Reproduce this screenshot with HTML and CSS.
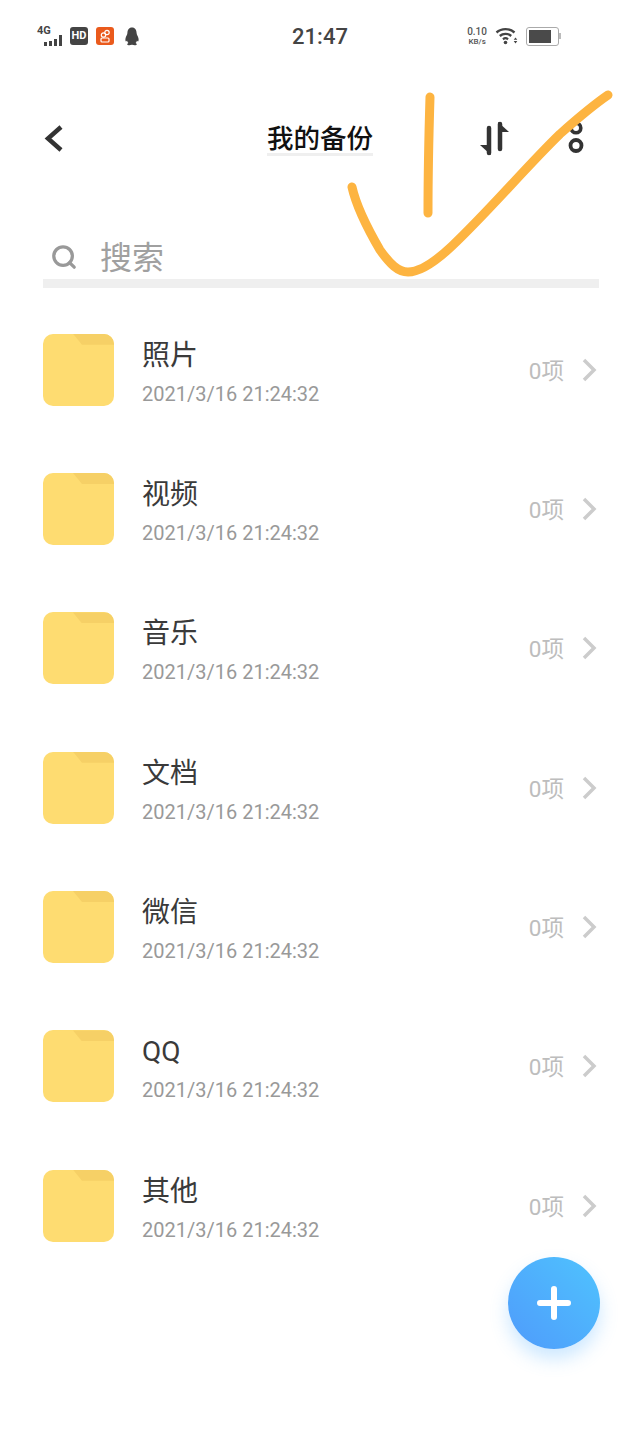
FILE: index.html
```html
<!DOCTYPE html>
<html lang="zh-CN">
<head>
    <meta charset="utf-8">
    <title>我的备份</title>
    <link rel="stylesheet" href="styles.css">
</head>
<body>
<div class="page">
    <div class="status_bar">
        <div class="status_left">
            <div class="signal">
                <span class="signal_text">4G</span>
                <svg class="signal_bars" width="22" height="14" viewBox="0 0 22 14">
                    <rect x="0" y="9" width="3" height="4" fill="#444"/>
                    <rect x="5" y="8" width="3" height="5" fill="#444"/>
                    <rect x="10" y="6" width="3" height="7" fill="#444"/>
                    <rect x="15" y="2" width="3" height="11" fill="#444"/>
                </svg>
            </div>
            <span class="hd_badge">HD</span>
            <svg class="app_badge" width="18" height="18" viewBox="0 0 18 18">
                <rect width="18" height="18" rx="3" fill="#ea5a1c"/>
                <circle cx="11" cy="5.500" r="2.200" fill="none" stroke="#fff" stroke-width="1.200"/>
                <circle cx="7.500" cy="8" r="2.200" fill="none" stroke="#fff" stroke-width="1.200"/>
                <rect x="5" y="11" width="8" height="4" rx="1" fill="none" stroke="#fff" stroke-width="1.200"/>
            </svg>
            <svg class="qq_icon" width="16" height="19" viewBox="0 0 16 19">
                <path d="M8 0.5C4.8 0.5 3.4 3 3.4 6C3.4 7.5 2 9 1.5 11.5C1.2 13 1.5 14.5 2 14.5C2.5 14.5 3 13.5 3 13.5C3.3 14.6 3.8 15.4 4.4 16C3.4 16.5 3 17 3.2 17.6C3.5 18.4 6 18.5 8 17.8C10 18.5 12.5 18.4 12.8 17.6C13 17 12.6 16.5 11.6 16C12.2 15.4 12.7 14.6 13 13.5C13 13.5 13.5 14.5 14 14.5C14.5 14.5 14.8 13 14.5 11.5C14 9 12.6 7.5 12.6 6C12.6 3 11.2 0.5 8 0.5Z" fill="#444"/>
            </svg>
        </div>
        <div class="status_time">21:47</div>
        <div class="status_right">
            <div class="net_speed">
                <span class="net_value">0.10</span>
                <span class="net_unit">KB/s</span>
            </div>
            <svg class="wifi_icon" width="24" height="18" viewBox="0 0 24 18">
                <path d="M1.5 5.5C6.5 1 14.5 1 19.5 5.5" fill="none" stroke="#444" stroke-width="2.400"/>
                <path d="M4.8 9C8 6.2 13 6.2 16.2 9" fill="none" stroke="#444" stroke-width="2.400"/>
                <path d="M8 12.3C9.5 11 11.5 11 13 12.3" fill="none" stroke="#444" stroke-width="2.200"/>
                <circle cx="10.500" cy="15.500" r="1.800" fill="#444"/>
                <path d="M20.5 10.5L22.3 12.7H18.7Z M20.5 16.5L18.7 14H22.3Z" fill="#444"/>
            </svg>
            <div class="battery">
                <div class="battery_body"><div class="battery_fill"></div></div>
                <div class="battery_cap"></div>
            </div>
        </div>
    </div>

    <div class="nav_bar">
        <svg class="back_icon" width="24" height="30" viewBox="0 0 24 30">
            <path d="M20 4L7 15.500L20 27" fill="none" stroke="#333" stroke-width="4.500"/>
        </svg>
        <div class="nav_title">我的备份</div>
        <svg class="sort_icon" width="34" height="38" viewBox="0 0 34 38">
            <path d="M11 8V33M22 4V29" stroke="#333" stroke-width="4.500" stroke-linecap="round"/>
            <path d="M2 25H13V35Z" fill="#333"/>
            <path d="M20 2L31 12H20Z" fill="#333"/>
        </svg>
        <svg class="more_icon" width="20" height="38" viewBox="0 0 20 38">
            <circle cx="10" cy="8" r="4.800" fill="none" stroke="#333" stroke-width="3.600"/>
            <circle cx="10" cy="25.500" r="5.500" fill="none" stroke="#333" stroke-width="3.800"/>
        </svg>
    </div>

    <div class="search_row">
        <svg class="search_icon" width="26" height="26" viewBox="0 0 28 28">
            <circle cx="13" cy="13" r="10" fill="none" stroke="#999" stroke-width="3.500"/>
            <path d="M20 20L25 25" stroke="#999" stroke-width="3.500" stroke-linecap="round"/>
        </svg>
        <span class="search_text">搜索</span>
    </div>

    <div class="backup_list">
        <div class="backup_row">
            <div class="folder"><div class="folder_tab"></div></div>
            <div class="row_text"><div class="row_name">照片</div><div class="row_date">2021/3/16 21:24:32</div></div>
            <div class="row_count">0项</div>
            <svg class="row_arrow" width="16" height="26" viewBox="0 0 16 26"><path d="M3 3L13 13L3 23" fill="none" stroke="#ccc" stroke-width="3.500"/></svg>
        </div>
        <div class="backup_row">
            <div class="folder"><div class="folder_tab"></div></div>
            <div class="row_text"><div class="row_name">视频</div><div class="row_date">2021/3/16 21:24:32</div></div>
            <div class="row_count">0项</div>
            <svg class="row_arrow" width="16" height="26" viewBox="0 0 16 26"><path d="M3 3L13 13L3 23" fill="none" stroke="#ccc" stroke-width="3.500"/></svg>
        </div>
        <div class="backup_row">
            <div class="folder"><div class="folder_tab"></div></div>
            <div class="row_text"><div class="row_name">音乐</div><div class="row_date">2021/3/16 21:24:32</div></div>
            <div class="row_count">0项</div>
            <svg class="row_arrow" width="16" height="26" viewBox="0 0 16 26"><path d="M3 3L13 13L3 23" fill="none" stroke="#ccc" stroke-width="3.500"/></svg>
        </div>
        <div class="backup_row">
            <div class="folder"><div class="folder_tab"></div></div>
            <div class="row_text"><div class="row_name">文档</div><div class="row_date">2021/3/16 21:24:32</div></div>
            <div class="row_count">0项</div>
            <svg class="row_arrow" width="16" height="26" viewBox="0 0 16 26"><path d="M3 3L13 13L3 23" fill="none" stroke="#ccc" stroke-width="3.500"/></svg>
        </div>
        <div class="backup_row">
            <div class="folder"><div class="folder_tab"></div></div>
            <div class="row_text"><div class="row_name">微信</div><div class="row_date">2021/3/16 21:24:32</div></div>
            <div class="row_count">0项</div>
            <svg class="row_arrow" width="16" height="26" viewBox="0 0 16 26"><path d="M3 3L13 13L3 23" fill="none" stroke="#ccc" stroke-width="3.500"/></svg>
        </div>
        <div class="backup_row">
            <div class="folder"><div class="folder_tab"></div></div>
            <div class="row_text"><div class="row_name">QQ</div><div class="row_date">2021/3/16 21:24:32</div></div>
            <div class="row_count">0项</div>
            <svg class="row_arrow" width="16" height="26" viewBox="0 0 16 26"><path d="M3 3L13 13L3 23" fill="none" stroke="#ccc" stroke-width="3.500"/></svg>
        </div>
        <div class="backup_row">
            <div class="folder"><div class="folder_tab"></div></div>
            <div class="row_text"><div class="row_name">其他</div><div class="row_date">2021/3/16 21:24:32</div></div>
            <div class="row_count">0项</div>
            <svg class="row_arrow" width="16" height="26" viewBox="0 0 16 26"><path d="M3 3L13 13L3 23" fill="none" stroke="#ccc" stroke-width="3.500"/></svg>
        </div>
    </div>

    <div class="add_button">
        <svg width="34" height="34" viewBox="0 0 34 34">
            <path d="M3 17H31M17 3V31" stroke="#fff" stroke-width="6" stroke-linecap="round"/>
        </svg>
    </div>

    <!-- orange marks drawn over the screenshot -->
    <svg class="scribble" width="640" height="300" viewBox="0 0 640 300">
        <path d="M430 97C429 130 428 175 428 213" fill="none" stroke="#fdb441" stroke-width="9" stroke-linecap="round"/>
        <path d="M352 187C356 205 366 226 380 250C390 264 398 272 408 272C420 272 435 262 452 246C490 210 525 168 560 134C578 118 592 106 608 95" fill="none" stroke="#fdb441" stroke-width="9" stroke-linecap="round"/>
    </svg>
</div>
</body>
</html>
```
FILE: styles.css
```css
*{
    box-sizing:border-box;
}

body{
    margin:0;
    background-color:white;
    font-family:"Roboto","Noto Sans CJK SC",sans-serif;
}

.page{
    position:relative;
    width:640px;
    height:1433px;
    overflow:hidden;
}

.status_bar{
    height:72px;
    padding:0 37px;
    display:grid;
    grid-template-columns:1fr auto 1fr;
    align-items:center;
    color:#444;
}

.status_left{
    display:flex;
    align-items:center;
}

.signal{
    position:relative;
    width:30px;
    height:22px;
}

.signal_text{
    position:absolute;
    left:0;
    top:0;
    font-size:11px;
    font-weight:700;
    line-height:12px;
}

.signal_bars{
    position:absolute;
    left:7px;
    top:8px;
}

.hd_badge{
    width:18px;
    height:18px;
    margin-left:3px;
    border-radius:3px;
    background-color:#444;
    color:white;
    font-size:11px;
    font-weight:700;
    line-height:18px;
    text-align:center;
}

.app_badge{
    margin-left:8px;
}

.qq_icon{
    margin-left:10px;
}

.status_time{
    font-size:22px;
    font-weight:500;
    color:#444;
}

.status_right{
    display:flex;
    align-items:center;
    justify-content:flex-end;
    padding-right:42px;
}

.net_speed{
    display:flex;
    flex-direction:column;
    align-items:center;
    margin-right:8px;
    color:#555;
    font-weight:500;
}

.net_value{
    font-size:10px;
    line-height:10px;
}

.net_unit{
    font-size:8px;
    line-height:9px;
}

.wifi_icon{
    margin-right:7px;
}

.battery{
    display:flex;
    align-items:center;
}

.battery_body{
    width:33px;
    height:19px;
    padding:2px;
    border:1px solid #aaa;
    border-radius:3px;
}

.battery_fill{
    width:22px;
    height:100%;
    background-color:#4a4a4a;
}

.battery_cap{
    width:2px;
    height:6px;
    background-color:#bbb;
}

.nav_bar{
    position:relative;
    height:130px;
}

.back_icon{
    position:absolute;
    left:41px;
    top:51px;
}

.nav_title{
    position:absolute;
    left:267px;
    top:47px;
    width:106px;
    height:37px;
    font-size:26.500px;
    font-weight:500;
    line-height:36px;
    color:#111;
    font-family:"Noto Sans CJK SC",sans-serif;
    white-space:nowrap;
    border-bottom:3px solid #efefef;
}

.sort_icon{
    position:absolute;
    left:478px;
    top:48px;
}

.more_icon{
    position:absolute;
    left:566px;
    top:48px;
}

.search_row{
    height:86px;
    margin:0 41px 0 43px;
    padding:0 0 2px 8px;
    display:flex;
    align-items:flex-end;
    border-bottom:9px solid #efefef;
}

.search_icon{
    margin-bottom:7px;
}

.search_text{
    margin-left:23px;
    font-size:32px;
    line-height:44px;
    color:#a0a0a0;
    font-family:"Noto Sans CJK SC",sans-serif;
}

.backup_list{
    padding-top:12.100px;
}

.backup_row{
    height:139.330px;
    padding:0 43px;
    display:flex;
    align-items:center;
}

.folder{
    position:relative;
    width:71px;
    height:72px;
    flex-shrink:0;
    border-radius:10px;
    background-color:#fedc71;
    overflow:hidden;
}

.folder_tab{
    position:absolute;
    right:0;
    top:0;
    width:41px;
    height:11px;
    background-color:#f6d066;
    clip-path:polygon(0 0,100% 0,100% 100%,22% 100%);
}

.row_text{
    flex:1;
    margin-left:28px;
    padding-top:4px;
}

.row_name{
    font-size:28px;
    line-height:40px;
    color:#3a3a3a;
    font-family:"Roboto","Noto Sans CJK SC",sans-serif;
}

.row_date{
    margin-top:4px;
    font-size:20px;
    line-height:28px;
    color:#999;
}

.row_count{
    font-size:22.500px;
    color:#bdbdbd;
    margin-right:17px;
    margin-bottom:2px;
}

.row_arrow{
    flex-shrink:0;
}

.add_button{
    position:absolute;
    left:508px;
    top:1257px;
    width:92px;
    height:92px;
    border-radius:50%;
    background:linear-gradient(45deg,#4f9bfb,#4fc3fe);
    box-shadow:0 10px 18px rgba(90,180,255,0.3);
    display:flex;
    align-items:center;
    justify-content:center;
}

.scribble{
    position:absolute;
    left:0;
    top:0;
}
```
